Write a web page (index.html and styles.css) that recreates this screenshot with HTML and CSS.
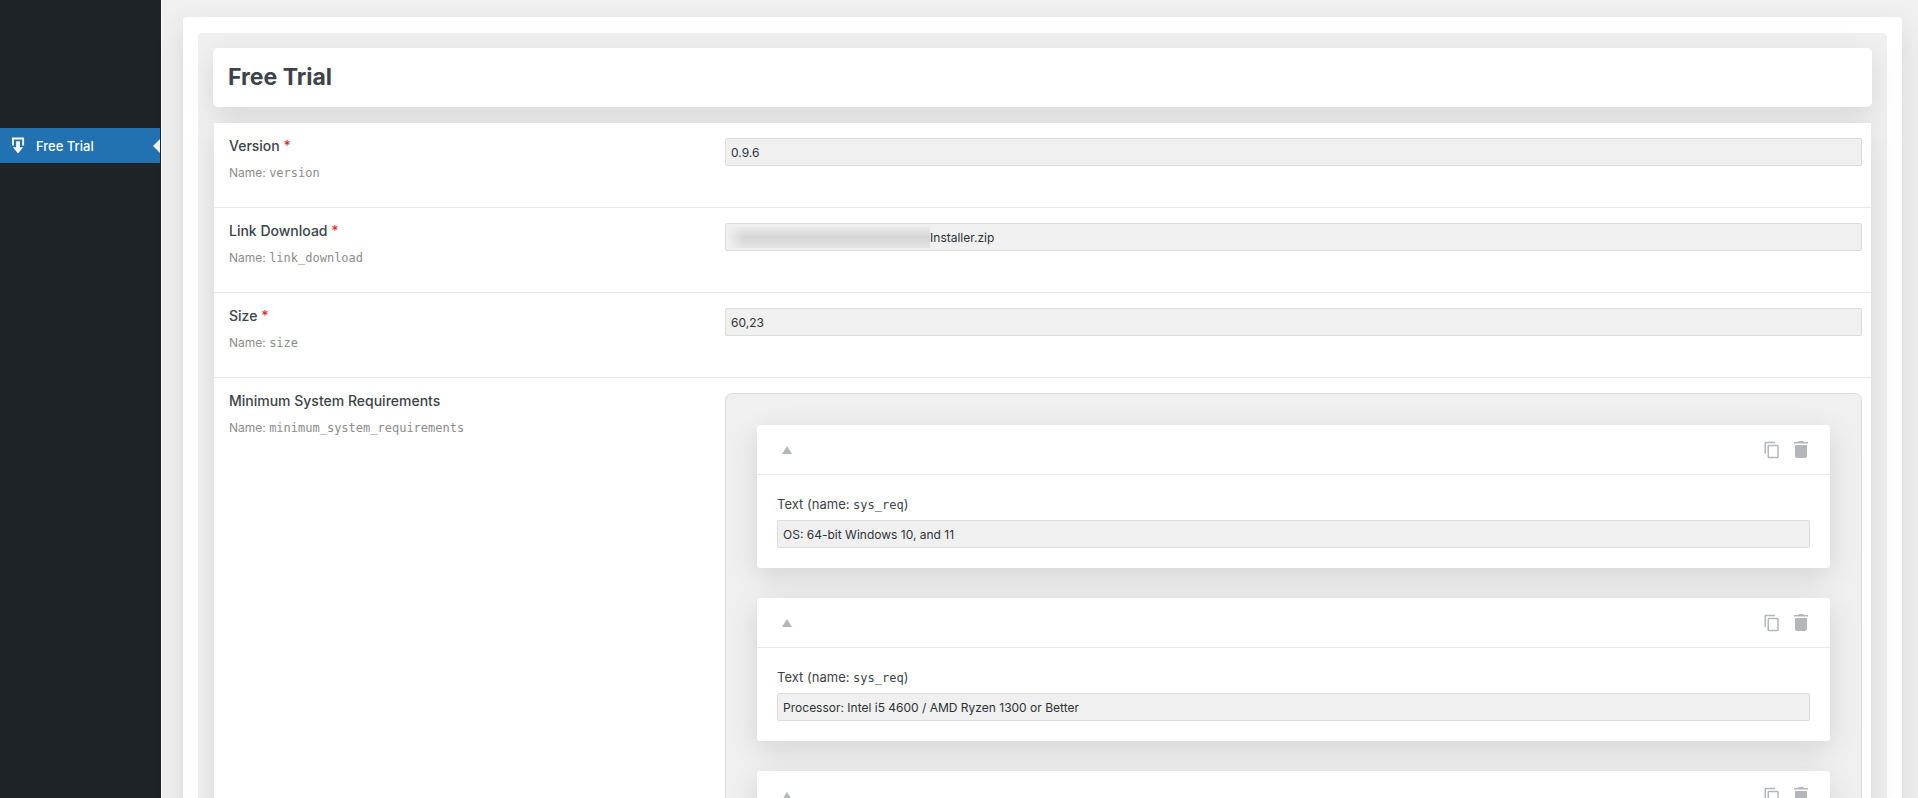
FILE: index.html
```html
<!DOCTYPE html>
<html lang="en">

<head>
  <meta charset="UTF-8">
  <meta name="viewport" content="width=device-width, initial-scale=1.0">
  <title>Free Trial</title>
  <link rel="stylesheet" href="styles.css">
</head>

<body>
  <!-- Icons shared by the repeater cards -->
  <svg class="sprite" aria-hidden="true">
    <symbol id="icon-up" viewBox="0 0 10 8">
      <path d="M5 0l5 8H0z" />
    </symbol>
    <symbol id="icon-copy" viewBox="0 0 24 24">
      <path d="M16 1H4c-1.100 0-2 .9-2 2v14h2V3h12V1zm3 4H8c-1.100 0-2 .9-2 2v14c0 1.100.9 2 2 2h11c1.100 0 2-.9 2-2V7c0-1.100-.9-2-2-2zm0 16H8V7h11v14z" />
    </symbol>
    <symbol id="icon-trash" viewBox="0 0 14 17">
      <path d="M1 4h12v11a2 2 0 0 1-2 2H3a2 2 0 0 1-2-2z" />
      <path d="M0 1h4l1-1h4l1 1h4v1.500H0z" />
    </symbol>
  </svg>

  <div class="layout">
    <nav class="sidebar">
      <a class="menu-item" href="#">
        <svg class="menu-icon" viewBox="0 0 14 17">
          <path d="M1 8.500V1h11v7.500" fill="none" stroke="#fff" stroke-width="2" />
          <path d="M4.500 4h4v6.500H12L6.500 17 1 10.500h3.500z" fill="#fff" />
        </svg>
        Free Trial
      </a>
    </nav>

    <main class="content">
      <div class="panel">
        <div class="panel-inner">
          <h1 class="title-card">Free Trial</h1>

          <form class="fields">
            <div class="row">
              <div class="row-label">
                <label class="row-title" for="version">Version <span class="required">*</span></label>
                <p class="name">Name: <code>version</code></p>
              </div>
              <div class="row-value">
                <input type="text" id="version" value="0.9.6">
              </div>
            </div>

            <div class="row">
              <div class="row-label">
                <label class="row-title" for="link_download">Link Download <span class="required">*</span></label>
                <p class="name">Name: <code>link_download</code></p>
              </div>
              <div class="row-value masked">
                <input type="text" id="link_download" value="Installer.zip">
                <span class="mask"></span>
              </div>
            </div>

            <div class="row">
              <div class="row-label">
                <label class="row-title" for="size">Size <span class="required">*</span></label>
                <p class="name">Name: <code>size</code></p>
              </div>
              <div class="row-value">
                <input type="text" id="size" value="60,23">
              </div>
            </div>

            <div class="row" role="group" aria-labelledby="requirements">
              <div class="row-label">
                <div class="row-title" id="requirements">Minimum System Requirements</div>
                <p class="name">Name: <code>minimum_system_requirements</code></p>
              </div>
              <div class="row-value">
                <div class="repeater">
                  <div class="card">
                    <div class="card-header">
                      <button type="button" class="toggle" aria-label="Collapse"><svg><use href="#icon-up" /></svg></button>
                      <button type="button" class="copy" aria-label="Duplicate"><svg><use href="#icon-copy" /></svg></button>
                      <button type="button" class="trash" aria-label="Delete"><svg><use href="#icon-trash" /></svg></button>
                    </div>
                    <div class="card-body">
                      <label for="sys_req_1">Text (name: <code>sys_req</code>)</label>
                      <input type="text" id="sys_req_1" value="OS: 64-bit Windows 10, and 11">
                    </div>
                  </div>

                  <div class="card">
                    <div class="card-header">
                      <button type="button" class="toggle" aria-label="Collapse"><svg><use href="#icon-up" /></svg></button>
                      <button type="button" class="copy" aria-label="Duplicate"><svg><use href="#icon-copy" /></svg></button>
                      <button type="button" class="trash" aria-label="Delete"><svg><use href="#icon-trash" /></svg></button>
                    </div>
                    <div class="card-body">
                      <label for="sys_req_2">Text (name: <code>sys_req</code>)</label>
                      <input type="text" id="sys_req_2" value="Processor: Intel i5 4600 / AMD Ryzen 1300 or Better">
                    </div>
                  </div>

                  <div class="card">
                    <div class="card-header">
                      <button type="button" class="toggle" aria-label="Collapse"><svg><use href="#icon-up" /></svg></button>
                      <button type="button" class="copy" aria-label="Duplicate"><svg><use href="#icon-copy" /></svg></button>
                      <button type="button" class="trash" aria-label="Delete"><svg><use href="#icon-trash" /></svg></button>
                    </div>
                  </div>
                </div>
              </div>
            </div>
          </form>
        </div>
      </div>
    </main>
  </div>
</body>

</html>
```

FILE: styles.css
```css
* {
  box-sizing: border-box;
}

body {
  margin: 0;
  font-family: Inter, "Liberation Sans", sans-serif;
  font-size: 12px;
  color: #3c434a;
  background: #f0f0f0;
}

code {
  font-family: "DejaVu Sans Mono", monospace;
  font-size: 12px;
}

.sprite {
  display: none;
}

.layout {
  display: flex;
  height: 100vh;
  overflow: hidden;
}

/* Sidebar */
.sidebar {
  flex: 0 0 162px;
  padding: 128px 1px 0 0;
  background: #1d2327;
  border-right: 1px solid #fff;
}

.menu-item {
  position: relative;
  display: flex;
  align-items: center;
  gap: 11px;
  height: 35px;
  padding-left: 12px;
  background: #2271b1;
  color: #fff;
  font-size: 13px;
  font-weight: 500;
  text-decoration: none;
}

.menu-item::after {
  content: "";
  position: absolute;
  right: 0;
  top: 50%;
  margin-top: -7px;
  border: 7px solid transparent;
  border-left: 0;
  border-right-color: #f0f0f1;
}

.menu-icon {
  width: 13px;
  height: 17px;
}

/* Content */
.content {
  flex: 1;
  min-width: 0;
  padding: 17px 16px 0 21px;
}

.panel {
  padding: 16px 15px;
  background: #fff;
  border-radius: 4px;
  box-shadow: 0 10px 30px rgba(0, 0, 0, 0.1);
}

.panel-inner {
  padding: 15px;
  background: #f0f0f0;
  border-radius: 4px;
}

.title-card {
  margin: 0 0 16px;
  padding: 15px;
  background: #fff;
  border-radius: 5px;
  box-shadow: 0 8px 30px rgba(0, 0, 0, 0.1);
  font-size: 23px;
  line-height: 29px;
  font-weight: 700;
}

.fields {
  position: relative;
  margin: 0 1px;
  background: #fff;
  box-shadow: 0 8px 30px rgba(0, 0, 0, 0.1);
}

.row {
  display: flex;
  min-height: 85px;
  border-bottom: 1px solid #e8e8e8;
}

.row-label {
  width: 30%;
  padding: 14px 15px;
}

.row-title {
  display: block;
  font-size: 14px;
  line-height: 18px;
  font-weight: 500;
}

.required {
  color: #e62e2e;
}

.name {
  margin: 10px 0 0;
  line-height: 16px;
  color: #8c8c8c;
}

.row-value {
  flex: 1;
  padding: 15px 9px 15px 14px;
}

input[type="text"] {
  display: block;
  width: 100%;
  height: 28px;
  padding: 0 5px;
  border: 1px solid #dcdcde;
  border-radius: 2px;
  background: #f0f0f0;
  color: #2c3338;
  font-family: inherit;
  font-size: 12px;
}

/* Hidden part of the download link */
.masked {
  position: relative;
}

.masked input[type="text"] {
  padding-left: 204px;
}

.mask {
  position: absolute;
  left: 16px;
  top: 19px;
  width: 203px;
  height: 21px;
  background: linear-gradient(90deg, #f0f0f0, transparent 16px), linear-gradient(#e9e9e9, #d6d6d6 50%, #e4e4e4);
}

/* Repeater */
.repeater {
  display: flex;
  flex-direction: column;
  gap: 30px;
  padding: 31px;
  background: #f0f0f0;
  border: 1px solid #dcdcde;
  border-radius: 7px;
}

.card {
  background: #fff;
  border-radius: 3px;
  box-shadow: 0 8px 30px rgba(0, 0, 0, 0.12);
}

.card-header {
  display: flex;
  align-items: center;
  height: 50px;
  padding: 0 22px 0 25px;
  border-bottom: 1px solid #e8e8e8;
}

.card-header button {
  padding: 0;
  border: 0;
  background: none;
  cursor: pointer;
}

.card-header svg {
  display: block;
  width: 100%;
  height: 100%;
  fill: #b4b6b9;
}

.toggle {
  width: 10px;
  height: 8px;
  margin-right: auto;
}

.copy {
  width: 18px;
  height: 18px;
  margin-right: 13px;
}

.trash {
  width: 14px;
  height: 17px;
}

.card-body {
  padding: 20px;
}

.card-body label {
  display: block;
  margin-bottom: 6px;
  font-size: 13px;
  line-height: 18px;
}
```
